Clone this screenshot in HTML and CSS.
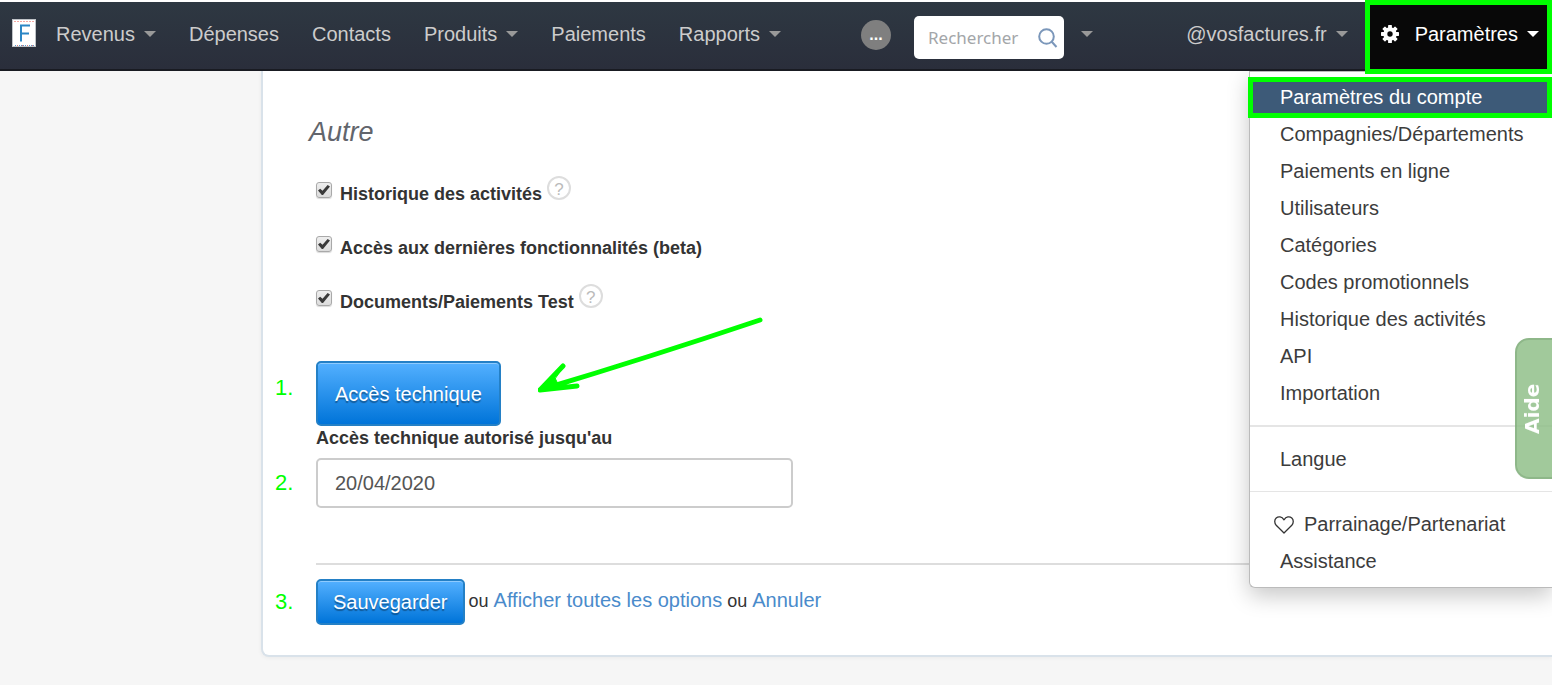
FILE: index.html
```html
<!DOCTYPE html>
<html lang="fr">
<head>
<meta charset="utf-8">
<title>Paramètres du compte</title>
<link rel="stylesheet" href="styles.css">
</head>
<body>
<div class="app">
  <header class="topbar">
    <a class="logo" href="#" aria-label="Accueil">
      <svg width="24" height="28" viewBox="0 0 24 28" aria-hidden="true">
        <rect width="24" height="28" fill="#bfc3c7"/>
        <rect x="1" y="1" width="22" height="26" fill="#fff"/>
        <path d="M2 2.5H22" stroke="#f3a9a4" stroke-width="1" stroke-dasharray="2 1"/>
        <path d="M3 26.5H22" stroke="#5b9bd0" stroke-width="1" stroke-dasharray="1 1"/>
        <path d="M5 26.5H22" stroke="#e57f78" stroke-width="1" stroke-dasharray="1 4"/>
        <path d="M9 6V22.500M8 6.500H18M9 14.500H17" stroke="#2b86c5" stroke-width="2" fill="none"/>
      </svg>
    </a>
    <nav class="menu">
      <a href="#">Revenus<span class="caret"></span></a>
      <a href="#">Dépenses</a>
      <a href="#">Contacts</a>
      <a href="#">Produits<span class="caret"></span></a>
      <a href="#">Paiements</a>
      <a href="#">Rapports<span class="caret"></span></a>
    </nav>
    <button class="more" type="button">...</button>
    <div class="search">
      <input type="text" placeholder="Rechercher" aria-label="Rechercher">
      <svg width="20" height="20" viewBox="0 0 20 20" fill="none" stroke="#7b97ba" stroke-width="2" aria-hidden="true">
        <circle cx="8.500" cy="8.500" r="7.300"/><path d="M13.500 13.500L18.500 19"/>
      </svg>
    </div>
    <button class="search-options" type="button" aria-label="Options de recherche"><span class="caret"></span></button>
    <a class="user" href="#">@vosfactures.fr<span class="caret"></span></a>
    <a class="settings" href="#">
      <svg width="18" height="18" viewBox="-9 -9 18 18" aria-hidden="true">
        <g fill="#fff">
          <rect x="-1.900" y="-9" width="3.800" height="18" rx=".6"/>
          <rect x="-1.900" y="-9" width="3.800" height="18" rx=".6" transform="rotate(45)"/>
          <rect x="-1.900" y="-9" width="3.800" height="18" rx=".6" transform="rotate(90)"/>
          <rect x="-1.900" y="-9" width="3.800" height="18" rx=".6" transform="rotate(135)"/>
          <circle r="6.700"/>
        </g>
        <circle r="2.700" fill="#080808"/>
      </svg>
      <span>Paramètres</span><span class="caret"></span>
    </a>
    <div class="dropdown">
      <ul>
        <li><a class="current" href="#">Paramètres du compte</a></li>
        <li><a href="#">Compagnies/Départements</a></li>
        <li><a href="#">Paiements en ligne</a></li>
        <li><a href="#">Utilisateurs</a></li>
        <li><a href="#">Catégories</a></li>
        <li><a href="#">Codes promotionnels</a></li>
        <li><a href="#">Historique des activités</a></li>
        <li><a href="#">API</a></li>
        <li><a href="#">Importation</a></li>
      </ul>
      <ul>
        <li><a href="#">Langue</a></li>
      </ul>
      <ul>
        <li><a class="with-icon" href="#">
          <svg width="20" height="18" viewBox="0 0 20 18" fill="none" stroke="#333" stroke-width="1.300" stroke-linejoin="round" aria-hidden="true">
            <path d="M10 17L2.200 9.200C.2 7 .3 3.800 2.200 2 4.500 .1 7.800 .6 10 3.800 12.200 .6 15.500 .1 17.800 2 19.700 3.800 19.800 7 17.800 9.200Z"/>
          </svg>Parrainage/Partenariat</a></li>
        <li><a href="#">Assistance</a></li>
      </ul>
    </div>
  </header>

  <main class="page">
    <form class="panel">
      <h2>Autre</h2>
      <div class="options">
        <div class="option">
          <input type="checkbox" id="history" checked>
          <label for="history">Historique des activités</label>
          <button class="help" type="button">?</button>
        </div>
        <div class="option">
          <input type="checkbox" id="beta" checked>
          <label for="beta">Accès aux dernières fonctionnalités (beta)</label>
        </div>
        <div class="option">
          <input type="checkbox" id="test" checked>
          <label for="test">Documents/Paiements Test</label>
          <button class="help" type="button">?</button>
        </div>
      </div>
      <div class="step access">
        <span class="number">1.</span>
        <div class="access-body">
          <button class="btn btn-large" type="button">Accès technique</button>
          <svg class="arrow" width="226" height="78" viewBox="0 0 226 78" fill="none" stroke="#0f0" stroke-width="5" stroke-linecap="round" stroke-linejoin="round" aria-hidden="true">
            <path d="M222 4Q112 41 2 74M25 50L2 74L39 70"/>
            <path d="M25 51L2 74L39 69L12 71Z" stroke-width="1"/>
            <path d="M4 72L16 60L20 68Z" fill="#0f0" stroke-width="1"/>
          </svg>
        </div>
      </div>
      <label class="date-label" for="until">Accès technique autorisé jusqu'au</label>
      <div class="step">
        <span class="number">2.</span>
        <input class="date" type="text" id="until" value="20/04/2020">
      </div>
      <hr>
      <div class="step">
        <span class="number">3.</span>
        <div class="actions">
          <button class="btn" type="submit">Sauvegarder</button>
          <p>ou <a href="#">Afficher toutes les options</a> ou <a href="#">Annuler</a></p>
        </div>
      </div>
    </form>
  </main>
</div>
<a class="aide" href="#">Aide</a>
</body>
</html>
```

FILE: styles.css
```css
* { box-sizing: border-box; }

body {
  margin: 0;
  background: #fff;
  color: #333;
  font: 20px/24px "Liberation Sans", Arial, sans-serif;
}

a { color: inherit; text-decoration: none; }
button, input { font: inherit; margin: 0; }
button { cursor: pointer; }
ul { list-style: none; margin: 0; padding: 0; }

.app {
  display: flex;
  flex-direction: column;
  min-height: 100vh;
  padding: 2px 2px 0 0;
}

/* Top bar */
.topbar {
  position: relative;
  z-index: 2;
  display: flex;
  align-items: flex-start;
  height: 69px;
  padding-left: 12px;
  background: linear-gradient(#2e3842, #2a2e3b);
  border-bottom: 2px solid #191b22;
  color: #ccc;
}

.logo { margin-top: 17px; line-height: 0; }

.menu {
  display: flex;
  gap: 33px;
  margin-left: 20px;
  padding-top: 20px;
}

.menu a, .user { display: flex; align-items: center; gap: 9px; }

.caret {
  border: 6px solid transparent;
  border-top-color: #999;
  border-bottom: 0;
}

.more {
  width: 30px;
  height: 30px;
  margin: 18px 0 0 80px;
  padding: 0;
  border: 0;
  border-radius: 50%;
  background: #7f7f7f;
  color: #fff;
  font-size: 16px;
  font-weight: bold;
  line-height: 28px;
}

.search {
  display: flex;
  align-items: center;
  width: 150px;
  height: 43px;
  margin: 14px 0 0 23px;
  padding: 0 6px 0 14px;
  border-radius: 5px;
  background: #fff;
}

.search input {
  flex: 1;
  min-width: 0;
  padding: 0;
  border: 0;
  background: none;
  font-family: "Noto Sans", sans-serif;
  font-size: 17px;
}

.search input::placeholder { color: #a3a6a9; }

.search-options {
  display: flex;
  margin: 29px 0 0 17px;
  padding: 0;
  border: 0;
  background: none;
}

.user { margin-left: auto; padding: 20px 17px 0 0; }

.settings {
  position: relative;
  z-index: 2;
  display: flex;
  align-items: center;
  height: 74px;
  margin-top: -2px;
  padding: 0 8px 6px 11px;
  border: 5px solid #0f0;
  background: #080808;
  color: #fff;
}

.settings svg { margin-right: 16px; }
.settings .caret { margin-left: 9px; border-top-color: #fff; }

/* Settings menu */
.dropdown {
  position: absolute;
  top: 69px;
  right: 0;
  width: 303px;
  padding: 7px 0;
  border: 1px solid #bbb;
  border-right: 0;
  border-radius: 0 0 0 6px;
  background: #fff;
  box-shadow: 0 8px 22px rgba(0, 0, 0, .22);
  clip-path: inset(0 0 -40px -40px);
  color: #3c3c3c;
}

.dropdown ul + ul {
  margin-top: 13px;
  padding-top: 14px;
  border-top: 2px solid #e5e5e5;
}

.dropdown ul:last-child { border-top-width: 1px; }

.dropdown a {
  display: block;
  padding: 0 30px;
  line-height: 37px;
}

.dropdown .with-icon {
  display: flex;
  align-items: center;
  gap: 10px;
  padding-left: 24px;
}

.dropdown .current {
  position: relative;
  margin-left: -2px;
  padding-left: 32px;
  background: #3d5a78;
  color: #fff;
}

.dropdown .current::after {
  content: "";
  position: absolute;
  inset: -2px 0;
  border: 5px solid #0f0;
}

/* Page */
.page {
  flex: 1;
  padding: 0 0 28px 261px;
  background: #f6f6f6;
}

.panel {
  padding: 45px 0 30px 12px;
  border: 2px solid #d9e2ea;
  border-width: 0 0 2px 2px;
  border-bottom-left-radius: 8px;
  background: #fff;
  box-shadow: 0 1px 4px rgba(0, 0, 0, .05);
  clip-path: inset(0 0 -8px -8px);
}

.panel h2 {
  margin: 0 0 28px 34px;
  color: #62656c;
  font-size: 27px;
  font-style: italic;
  font-weight: normal;
  line-height: 32px;
}

.options {
  display: flex;
  flex-direction: column;
  gap: 24px;
  padding-left: 41px;
}

.option {
  display: flex;
  align-items: flex-start;
  height: 30px;
}

.option input {
  appearance: none;
  width: 16px;
  height: 16px;
  margin: 6px 8px 0 0;
  border: 1px solid #a9a9a9;
  border-radius: 3px;
  background: linear-gradient(#eee, #dcdcdc);
  box-shadow: 0 1px 1px rgba(0, 0, 0, .15);
}

.option input:checked::before {
  content: "";
  display: block;
  width: 12px;
  height: 10px;
  margin: 2px 1px;
  background: #3a3a3a;
  clip-path: polygon(0 55%, 18% 38%, 38% 58%, 80% 0, 100% 14%, 42% 100%, 32% 100%);
}

.option label, .date-label {
  font-size: 18px;
  font-weight: bold;
}

.option label { padding-top: 6px; }

.help {
  width: 24px;
  height: 24px;
  margin-left: 5px;
  padding: 3px 0 0;
  border: 2px solid #ddd;
  border-radius: 50%;
  background: #fff;
  color: #bbb;
  font-size: 17px;
  line-height: 18px;
}

.step {
  display: grid;
  grid-template-columns: 41px 1fr;
  align-items: center;
}

.access { margin-top: 47px; }
.access .number { padding-bottom: 12px; }
.access-body { position: relative; }

.arrow {
  position: absolute;
  bottom: 32px;
  left: 222px;
}

.number { color: #0f0; font-size: 22px; }

.btn {
  display: block;
  height: 46px;
  padding: 0 15px;
  border: 2px solid #2480c6;
  border-radius: 5px;
  background: linear-gradient(#53b0ff, #0074d9);
  box-shadow: inset 0 1px 0 rgba(255, 255, 255, .35);
  color: #fff;
  text-shadow: 0 2px 1px rgba(0, 0, 0, .35);
}

.btn-large { height: 65px; padding: 0 17px; }

.date-label {
  display: block;
  margin: 0 0 8px 41px;
}

.date {
  width: 477px;
  max-width: 100%;
  height: 50px;
  padding: 0 17px;
  border: 2px solid #ccc;
  border-radius: 5px;
  background: #fff;
  color: #555;
}

.panel hr {
  height: 2px;
  margin: 55px 0 14px 41px;
  border: 0;
  background: #ddd;
}

.actions { display: flex; align-items: center; gap: 4px; }
.actions p { margin: 0; padding-bottom: 3px; font-size: 18px; }
.actions a { color: #4a8bcb; font-size: 20px; }

/* Help tab, turned to read upwards: its right side faces the page */
.aide {
  position: fixed;
  z-index: 3;
  top: 338px;
  right: 2px;
  width: 37px;
  height: 141px;
  border: 2px solid rgba(125, 165, 120, .5);
  border-left: 0;
  border-radius: 0 14px 14px 0;
  background: rgba(145, 192, 138, .85);
  color: #fff;
  font: bold 20px/31px "DejaVu Sans", Verdana, sans-serif;
  text-align: center;
  writing-mode: vertical-rl;
  rotate: 180deg;
}
```
